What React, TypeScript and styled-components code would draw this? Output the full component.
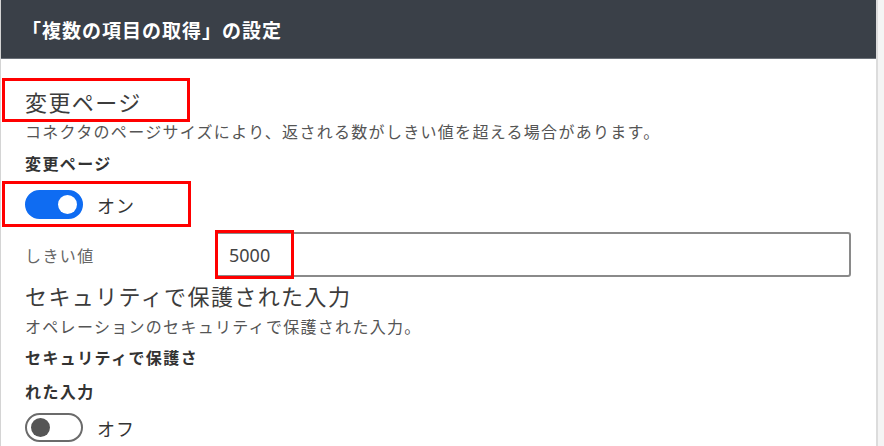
import React from 'react';
import styled, { createGlobalStyle } from 'styled-components';

const GlobalStyle = createGlobalStyle`
  html, body {
    margin: 0;
    padding: 0;
    background: #f4f4f4;
  }
  body {
    font-family: "Noto Sans CJK JP", "Noto Sans", sans-serif;
    color: #333;
  }
`;

export default function App() {
  return (
    <>
      <GlobalStyle />
      <Panel>
        <Header>
          <Title>「複数の項目の取得」の設定</Title>
        </Header>
        <Body>
          <SectionTitle>
            変更ページ
            <Outline $top={-9} $left={-23} $width={188} $height={44} />
          </SectionTitle>
          <Description $top={6}>
            コネクタのページサイズにより、返される数がしきい値を超える場合があります。
          </Description>
          <FieldLabel $top={12}>変更ページ</FieldLabel>
          <ToggleRow $top={17}>
            <Toggle $on>
              <Knob $on />
            </Toggle>
            <ToggleText>オン</ToggleText>
            <Outline $top={-9} $left={-23} $width={189} $height={46} />
          </ToggleRow>
          <InputRow>
            <InputLabel>しきい値</InputLabel>
            <InputBox>
              5000
              <Outline $top={-4} $left={-2} $width={79} $height={49} />
            </InputBox>
          </InputRow>
          <SectionTitle $top={4}>セキュリティで保護された入力</SectionTitle>
          <Description $top={7}>オペレーションのセキュリティで保護された入力。</Description>
          <FieldLabel $top={4} $wrap>
            セキュリティで保護された入力
          </FieldLabel>
          <ToggleRow $top={5}>
            <Toggle>
              <Knob />
            </Toggle>
            <ToggleText>オフ</ToggleText>
          </ToggleRow>
        </Body>
      </Panel>
    </>
  );
}

const Panel = styled.div`
  width: 878px;
  height: 446px;
  box-sizing: border-box;
  background: #fff;
  border-left: 1px solid #d4d4d4;
  border-right: 2px solid #dcdcdc;
  overflow: hidden;
`;

const Header = styled.div`
  height: 58px;
  background: #3a4048;
  border-bottom: 1px solid #6a7078;
  display: flex;
  align-items: center;
  padding-left: 21px;
`;

const Title = styled.h1`
  margin: 0;
  font-size: 19px;
  font-weight: 700;
  letter-spacing: 1px;
  color: #fff;
`;

const Body = styled.div`
  padding: 28px 24px 0;
  display: flex;
  flex-direction: column;
  align-items: flex-start;
`;

const Outline = styled.span<{ $top: number; $left: number; $width: number; $height: number }>`
  position: absolute;
  top: ${p => p.$top}px;
  left: ${p => p.$left}px;
  width: ${p => p.$width}px;
  height: ${p => p.$height}px;
  box-sizing: border-box;
  border: 3px solid #f00;
  pointer-events: none;
`;

const SectionTitle = styled.h2<{ $top?: number }>`
  position: relative;
  margin: ${p => p.$top || 0}px 0 0;
  font-size: 22px;
  font-weight: 400;
  line-height: 28px;
  letter-spacing: 1.4px;
  color: #3c3c3c;
`;

const Description = styled.p<{ $top: number }>`
  margin: ${p => p.$top}px 0 0;
  font-size: 16px;
  line-height: 20px;
  letter-spacing: 1.3px;
  color: #555;
`;

const FieldLabel = styled.div<{ $top: number; $wrap?: boolean }>`
  margin-top: ${p => p.$top}px;
  font-size: 16px;
  font-weight: 700;
  line-height: ${p => (p.$wrap ? 34 : 20)}px;
  letter-spacing: 1.4px;
  color: #333;
  max-width: ${p => (p.$wrap ? '180px' : 'none')};
`;

const ToggleRow = styled.div<{ $top: number }>`
  position: relative;
  margin-top: ${p => p.$top}px;
  display: flex;
  align-items: center;
  gap: 14px;
`;

const Toggle = styled.span<{ $on?: boolean }>`
  width: 58px;
  height: 29px;
  box-sizing: border-box;
  border-radius: 15px;
  background: ${p => (p.$on ? '#0f6cf2' : '#fff')};
  border: 2px solid ${p => (p.$on ? '#0f6cf2' : '#6b6b6b')};
  display: flex;
  align-items: center;
  justify-content: ${p => (p.$on ? 'flex-end' : 'flex-start')};
  padding: 0 4px;
`;

const Knob = styled.span<{ $on?: boolean }>`
  width: 19px;
  height: 19px;
  border-radius: 50%;
  background: ${p => (p.$on ? '#fff' : '#555')};
`;

const ToggleText = styled.span`
  font-size: 18px;
  letter-spacing: 1px;
  color: #333;
`;

const InputRow = styled.div`
  margin-top: 13px;
  display: flex;
  align-items: center;
  align-self: stretch;
`;

const InputLabel = styled.span`
  width: 190px;
  font-size: 16px;
  letter-spacing: 1.4px;
  color: #666;
`;

const InputBox = styled.div`
  position: relative;
  width: 636px;
  height: 45px;
  box-sizing: border-box;
  border: 2px solid #8a8a8a;
  border-radius: 3px;
  padding: 0 12px;
  display: flex;
  align-items: center;
  font-family: "Noto Sans", sans-serif;
  font-size: 18px;
  color: #444;
`;
